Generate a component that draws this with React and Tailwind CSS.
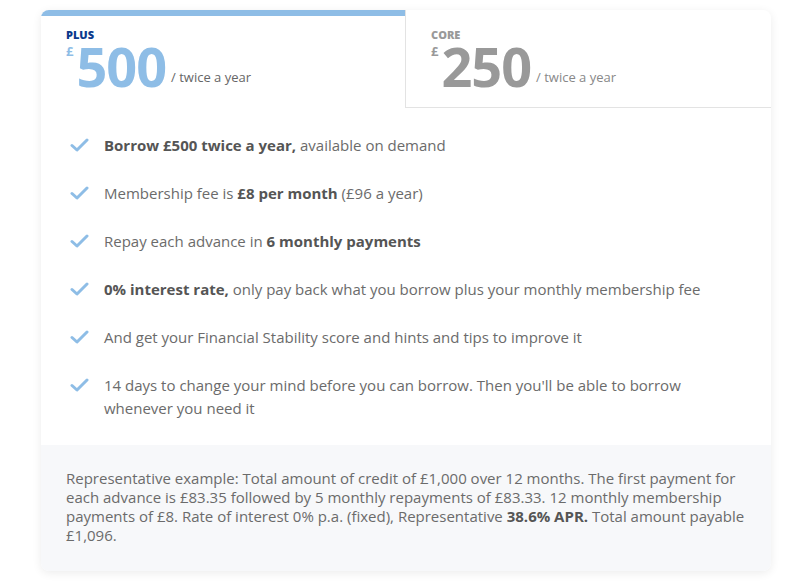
import React from 'react';

const Check = () => (
    <svg className="w-[19px] h-[14px] shrink-0 mt-[4px]" viewBox="0 0 19 14" fill="none">
        <path d="M2 7.5 L7 12 L17 2" stroke="#8ebde6" strokeWidth="3" strokeLinecap="round" strokeLinejoin="round" />
    </svg>
);

const features = [
    <><b className="font-bold text-[#555]">Borrow £500 twice a year,</b> available on demand</>,
    <>Membership fee is <b className="font-bold text-[#555]">£8 per month</b> (£96 a year)</>,
    <>Repay each advance in <b className="font-bold text-[#555]">6 monthly payments</b></>,
    <><b className="font-bold text-[#555]">0% interest rate,</b> only pay back what you borrow plus your monthly membership fee</>,
    <>And get your Financial Stability score and hints and tips to improve it</>,
    <>14 days to change your mind before you can borrow. Then you'll be able to borrow whenever you need it</>,
];

const Price = ({ label, amount, labelColor, color, subColor, top }) => (
    <div className={top}>
        <div className={`text-[11px] font-extrabold leading-none ${labelColor}`}>{label}</div>
        <div className="flex items-end -mt-[2px]">
            <span className={`text-[13px] font-bold self-start leading-none mt-[7px] ${color}`}>£</span>
            <span className={`text-[54px] font-bold leading-[56px] tracking-[-1px] ml-[3px] ${color}`}>{amount}</span>
            <span className={`text-[13px] ml-[5px] mb-[7px] ${subColor}`}>/ twice a year</span>
        </div>
    </div>
);

const App = () => {
    return (
        <div className="w-[808px] h-[585px] bg-white pt-[10px] pl-[41px]" style={{ fontFamily: '"Open Sans", sans-serif' }}>
            <div className="w-[730px] h-[561px] bg-white rounded-lg shadow-[0_2px_10px_rgba(0,0,0,0.08)] overflow-hidden flex flex-col">
                {/* Tabs */}
                <div className="flex h-[98px]">
                    <div className="w-[364px] border-t-[6px] border-[#8ebde6] pl-[25px]">
                        <Price label="PLUS" amount="500" labelColor="text-[#0b3a8c]" color="text-[#8ebde6]" subColor="text-[#666]" top="pt-[13px]" />
                    </div>
                    <div className="flex-1 border-l border-b border-[#e3e3e3] pl-[25px]">
                        <Price label="CORE" amount="250" labelColor="text-[#999]" color="text-[#999]" subColor="text-[#888]" top="pt-[19px]" />
                    </div>
                </div>

                {/* Features */}
                <ul className="flex-1 pl-[29px] pr-[30px] pt-[26px] flex flex-col gap-[25px] text-[15px] text-[#6b6b6b] leading-[23px]">
                    {features.map((f, i) => (
                        <li key={i} className="flex gap-[15px]">
                            <Check />
                            <span>{f}</span>
                        </li>
                    ))}
                </ul>

                {/* Representative example */}
                <div className="h-[126px] bg-[#f7f8fa] px-[25px] pt-[24px] text-[15px] leading-[19px] text-[#6b6b6b]">
                    Representative example: Total amount of credit of £1,000 over 12 months. The first payment for each advance is £83.35 followed by 5 monthly repayments of £83.33. 12 monthly membership payments of £8. Rate of interest 0% p.a. (fixed), Representative <b className="font-bold text-[#555]">38.6% APR.</b> Total amount payable £1,096.
                </div>
            </div>
        </div>
    );
};

export default App;
